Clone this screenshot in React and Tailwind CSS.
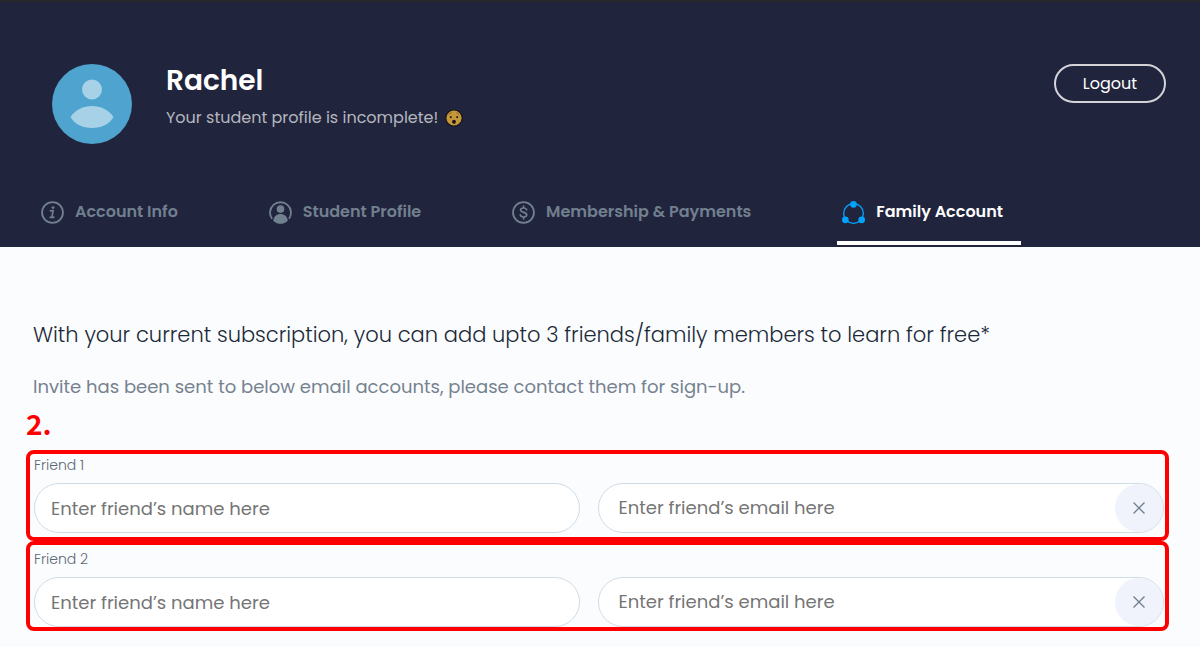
import { useState } from "react";

const TABS = [
  { id: "info", label: "Account Info", icon: InfoIcon },
  { id: "profile", label: "Student Profile", icon: ProfileIcon },
  { id: "payments", label: "Membership & Payments", icon: DollarIcon },
  { id: "family", label: "Family Account", icon: FamilyIcon },
];

function InfoIcon() {
  return (
    <svg viewBox="0 0 24 24" className="h-[23px] w-[23px]" fill="none" stroke="currentColor" aria-hidden="true">
      <circle cx="12" cy="12" r="10.9" strokeWidth="1.9" />
      <circle cx="12.5" cy="6.9" r="1.5" fill="currentColor" stroke="none" />
      <path d="M9.8 10.3c1-.3 1.9-.4 2.9-.4l-1.3 6.6c-.1.7.5.9 2.1.4M9.6 17.1h3.2" strokeWidth="1.7" strokeLinecap="round" />
    </svg>
  );
}

function ProfileIcon() {
  return (
    <svg viewBox="0 0 24 24" className="h-[23px] w-[23px]" fill="none" stroke="currentColor" aria-hidden="true">
      <path d="M3.2 18.6a10.9 10.9 0 1 1 17.6 0" strokeWidth="1.9" />
      <circle cx="12" cy="8.4" r="4" fill="currentColor" stroke="none" />
      <path d="M4.4 20.6c.4-4.4 3.6-7 7.6-7s7.2 2.6 7.6 7c-2 2.2-4.7 3.2-7.6 3.2s-5.6-1-7.6-3.2z" fill="currentColor" stroke="none" />
    </svg>
  );
}

function DollarIcon() {
  return (
    <svg viewBox="0 0 24 24" className="h-[23px] w-[23px]" fill="none" stroke="currentColor" aria-hidden="true">
      <circle cx="12" cy="12" r="10.9" strokeWidth="1.9" />
      <path
        d="M15.3 9.3c-.3-1.3-1.5-2-3.2-2-1.9 0-3.2.8-3.2 2.2 0 3.2 6.5 1.5 6.5 4.9 0 1.5-1.4 2.3-3.3 2.3s-3.2-.8-3.5-2.2M12.1 5.3v2M12.1 16.700v2"
        strokeWidth="1.7"
        strokeLinecap="round"
      />
    </svg>
  );
}

function FamilyIcon() {
  return (
    <svg viewBox="0 0 24 24" className="h-[23px] w-[23px]" aria-hidden="true">
      <circle cx="12" cy="13" r="10.3" fill="none" stroke="#02a3fe" strokeWidth="1.4" />
      <circle cx="12" cy="3.5" r="3.5" fill="#02a3fe" />
      <circle cx="3.5" cy="19.6" r="3.5" fill="#02a3fe" />
      <circle cx="20.5" cy="19.6" r="3.5" fill="#02a3fe" />
    </svg>
  );
}

function Avatar() {
  return (
    <svg viewBox="0 0 80 80" className="h-20 w-20 shrink-0" role="img" aria-label="Avatar">
      <circle cx="40" cy="40" r="40" fill="#4fa3cf" />
      <circle cx="40" cy="25.5" r="10" fill="#a7d1e7" />
      <path d="M18.5 53C24 45.5 31 42 40 42s16 3.5 21.500 11C57 60.5 49.500 64 40 64s-17-3.500-21.500-11z" fill="#a7d1e7" />
    </svg>
  );
}

function WorriedFace() {
  return (
    <svg viewBox="0 0 18 18" className="h-[18px] w-[18px]" role="img" aria-label="Worried face">
      <circle cx="9" cy="9" r="8.2" fill="#c6983a" stroke="#17171c" strokeWidth="1.2" />
      <path d="M3.7 5.7c.8-1.1 1.8-1.7 3-1.900M14.300 5.700c-.8-1.100-1.800-1.700-3-1.900" fill="none" stroke="#8a642c" strokeWidth="1" />
      <ellipse cx="5.8" cy="8.2" rx=".9" ry="1.1" fill="#17171c" />
      <ellipse cx="12.2" cy="8.2" rx=".9" ry="1.1" fill="#17171c" />
      <ellipse cx="9" cy="12.8" rx="1.9" ry="2.1" fill="#17171c" />
    </svg>
  );
}

function FriendRow({ number, className }) {
  const [name, setName] = useState("");
  const [email, setEmail] = useState("");

  const clear = () => {
    setName("");
    setEmail("");
  };

  return (
    <div className={className}>
      <label htmlFor={`name-${number}`} className="mb-2 block text-sm leading-5 font-light text-[#5b6975]">
        Friend {number}
      </label>
      <div className="grid grid-cols-[546fr_567fr] gap-[18px]">
        <input
          id={`name-${number}`}
          type="text"
          value={name}
          onChange={(e) => setName(e.target.value)}
          placeholder="Enter friend’s name here"
          className="h-[50px] w-full rounded-full border border-[#cfdce8] bg-white px-4 text-lg text-[#20303f] placeholder:text-[#757575]"
        />
        <div className="flex h-[50px] rounded-full border border-[#cfdce8] bg-white">
          <input
            type="email"
            aria-label={`Friend ${number} email`}
            value={email}
            onChange={(e) => setEmail(e.target.value)}
            placeholder="Enter friend’s email here"
            className="min-w-0 flex-1 rounded-full bg-transparent pl-5 text-lg text-[#20303f] placeholder:text-[#757575]"
          />
          <button
            type="button"
            aria-label={`Remove friend ${number}`}
            onClick={clear}
            className="flex h-12 w-12 items-center justify-center rounded-full bg-[#f0f3fb] text-[#6b7c8b]"
          >
            <svg viewBox="0 0 12 12" className="h-3 w-3" fill="none" stroke="currentColor" strokeWidth="1.3" aria-hidden="true">
              <path d="M.5.5l11 11M11.5.5l-11 11" />
            </svg>
          </button>
        </div>
      </div>
    </div>
  );
}

export default function App() {
  const [activeTab, setActiveTab] = useState("family");

  return (
    <div className="h-screen overflow-hidden bg-[#fbfcfe] font-['Poppins','Inter',sans-serif]">
      <header className="border-t-2 border-[#26282c] bg-[#21243d]">
        <div className="flex items-start pt-[62px] pr-[34px] pl-[52px]">
          <Avatar />
          <div className="ml-[34px] flex-1">
            <h1 className="text-[28px] leading-[34px] font-semibold text-white">Rachel</h1>
            <p className="mt-1.5 flex items-center gap-[7px] text-base leading-7 text-[#b5b6bd]">
              Your student profile is incomplete!
              <WorriedFace />
            </p>
          </div>
          <button type="button" className="h-[39px] w-28 rounded-full border-2 border-white/80 text-base text-white">
            Logout
          </button>
        </div>

        <nav className="mt-11 flex justify-between pr-[179px] pb-0.5 pl-9">
          {TABS.map(({ id, label, icon: Icon }) => (
            <button
              key={id}
              type="button"
              onClick={() => setActiveTab(id)}
              className={`flex h-[57px] items-end gap-[11px] border-b-4 pr-[18px] pb-[17px] pl-[5px] text-base font-semibold ${
                activeTab === id ? "border-white text-white" : "border-transparent text-[#71808f]"
              }`}
            >
              <Icon />
              {label}
            </button>
          ))}
        </nav>
      </header>

      <main className="px-[26px] pt-[72px]">
        <h2 className="pl-[7px] text-[21px] leading-8 font-light text-[#1a2937]">
          With your current subscription, you can add upto 3 friends/family members to learn for free*
        </h2>
        <p className="mt-5 pl-[7px] text-lg leading-8 text-[#75828f]">
          Invite has been sent to below email accounts, please contact them for sign-up.
        </p>
        <p className="mt-0.5 font-['Noto_Sans_CJK_SC',sans-serif] text-[28px] leading-9 font-bold text-[#fe0000]">2.</p>

        <div className="mt-[9px] pr-[5px]">
          <FriendRow number={1} className="rounded-lg border-4 border-[#fe0000] pt-px pr-px pb-1 pl-1" />
          <FriendRow number={2} className="rounded-lg border-4 border-[#fe0000] pt-1 pr-px pl-1" />
          <FriendRow number={3} className="pt-3 pr-[5px] pl-2" />
        </div>
      </main>
    </div>
  );
}
